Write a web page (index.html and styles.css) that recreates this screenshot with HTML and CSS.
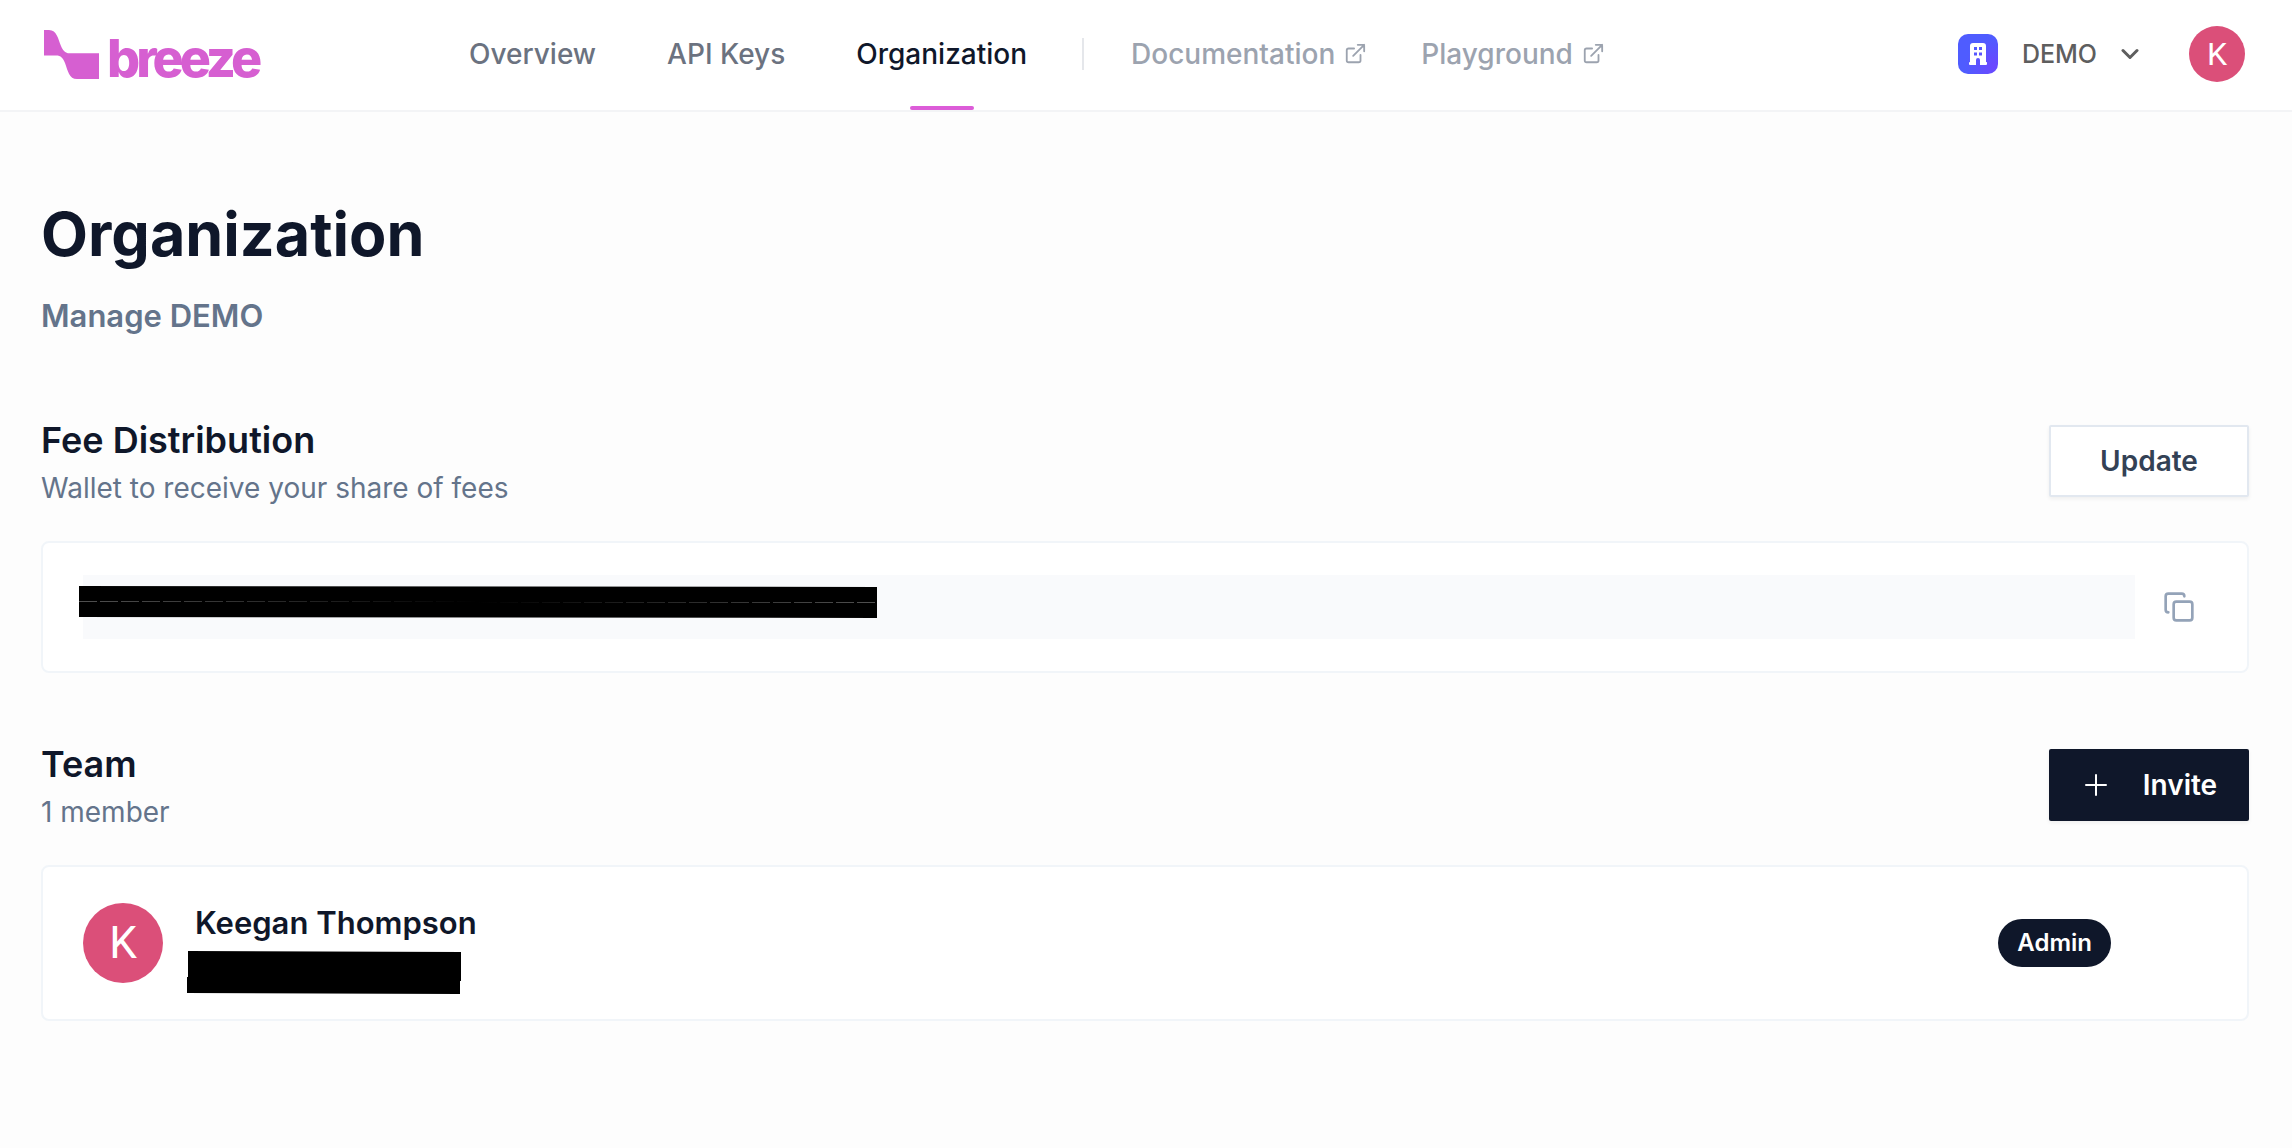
FILE: index.html
```html
<!DOCTYPE html>
<html lang="en">
<head>
<meta charset="utf-8">
<meta name="viewport" content="width=device-width, initial-scale=1">
<title>Organization</title>
<link rel="stylesheet" href="styles.css">
</head>
<body>
<header class="topbar">
  <a class="brand" href="#">
    <svg class="brand-mark" viewBox="0 0 55 49" aria-hidden="true"><path d="M0 0H5C13 0 14 9 17 16C19 21 22 23.300 25 23.300H55V49H33C25 49 24 41 21 33C19 28 17 25.500 12 25.500H0Z"/></svg>
    <span class="brand-name">breeze</span>
  </a>
  <nav class="nav">
    <a class="nav-link" href="#">Overview</a>
    <a class="nav-link" href="#">API Keys</a>
    <a class="nav-link active" href="#" aria-current="page">Organization</a>
    <span class="nav-divider"></span>
    <a class="nav-link external" href="#">Documentation
      <svg class="icon-ext" viewBox="0 0 24 24" aria-hidden="true"><path d="M18 13v6a2 2 0 0 1-2 2H5a2 2 0 0 1-2-2V8a2 2 0 0 1 2-2h6M15 2h7v7M10 14 22 2"/></svg></a>
    <a class="nav-link external" href="#">Playground
      <svg class="icon-ext" viewBox="0 0 24 24" aria-hidden="true"><path d="M18 13v6a2 2 0 0 1-2 2H5a2 2 0 0 1-2-2V8a2 2 0 0 1 2-2h6M15 2h7v7M10 14 22 2"/></svg></a>
  </nav>
  <div class="account">
    <button class="org-switch" type="button">
      <span class="org-logo"><svg viewBox="0 0 18 22" aria-hidden="true"><path fill-rule="evenodd" d="M4 0H14Q17 0 17 3V19H17.500Q18 19 18 20V21Q18 22 17 22H11V17Q11 15 9 15Q7 15 7 17V22H1Q0 22 0 21V20Q0 19 1 19V3Q1 0 4 0ZM5 4V7H8V4ZM10 4V7H13V4ZM5 9.500V12.500H8V9.500ZM10 9.500V12.500H13V9.500Z"/></svg></span>
      <span>DEMO</span>
      <svg class="chevron" viewBox="0 0 18 12" aria-hidden="true"><path d="M2 2.500 9 9.500 16 2.500"/></svg>
    </button>
    <button class="avatar" type="button" aria-label="Account">K</button>
  </div>
</header>
<main class="page">
  <h1>Organization</h1>
  <p class="lead">Manage DEMO</p>

  <section class="section">
    <div class="section-head">
      <div>
        <h2>Fee Distribution</h2>
        <p class="hint">Wallet to receive your share of fees</p>
      </div>
      <button class="btn btn-light" type="button">Update</button>
    </div>
    <div class="card wallet">
      <div class="address">
        <svg class="mask mask-address" viewBox="0 0 798 32" aria-label="Hidden wallet address">
          <defs>
            <linearGradient id="mask-fade" gradientUnits="userSpaceOnUse" x1="0" y1="0" x2="798" y2="0">
              <stop offset="0" stop-color="#505050"/>
              <stop offset="0.5" stop-color="#000"/>
              <stop offset="1" stop-color="#505050"/>
            </linearGradient>
          </defs>
          <path d="M0 0 798 1V32L0 31Z"/>
          <path class="mask-line" stroke="url(#mask-fade)" d="M0 15.500H400M400 16.500H798"/>
        </svg>
      </div>
      <button class="copy" type="button" aria-label="Copy address">
        <svg viewBox="0 0 24 24" aria-hidden="true"><rect x="8" y="8" width="14" height="14" rx="2"/><path d="M4 16a2 2 0 0 1-2-2V4a2 2 0 0 1 2-2h10a2 2 0 0 1 2 2"/></svg>
      </button>
    </div>
  </section>

  <section class="section">
    <div class="section-head">
      <div>
        <h2>Team</h2>
        <p class="hint">1 member</p>
      </div>
      <button class="btn btn-dark" type="button">
        <svg class="plus" viewBox="0 0 22 22" aria-hidden="true"><path d="M11 1V21M1 11H21"/></svg>
        Invite
      </button>
    </div>
    <div class="card member">
      <span class="avatar avatar-large">K</span>
      <div class="member-info">
        <p class="member-name">Keegan Thompson</p>
        <svg class="mask mask-email" viewBox="0 0 274 43" aria-label="Hidden email"><path d="M1 0 274 1V30H273V43L0 42V26H1Z"/></svg>
      </div>
      <span class="badge">Admin</span>
    </div>
  </section>
</main>
</body>
</html>
```
FILE: styles.css
```css
* { box-sizing: border-box; }

body {
  margin: 0;
  background: #fdfdfd;
  color: #0f172a;
  font-family: Inter, "Liberation Sans", sans-serif;
  font-weight: 500;
}

h1, h2, p { margin: 0; }

a { color: inherit; text-decoration: none; }

button {
  border: 0;
  background: none;
  padding: 0;
  color: inherit;
  font: inherit;
  cursor: pointer;
}

svg { display: block; flex: none; }

/* Header */
.topbar {
  display: flex;
  align-items: center;
  height: 112px;
  padding: 0 47px 2px 44px;
  background: #fff;
  border-bottom: 2px solid #f3f4f6;
}

.brand {
  display: flex;
  align-items: flex-end;
  gap: 8px;
  width: 425px;
  color: #d65fd1;
}

.brand-mark { width: 55px; height: 49px; fill: currentColor; }

.brand-name {
  font-size: 52px;
  line-height: 40px;
  font-weight: 800;
  letter-spacing: -4px;
}

.nav {
  display: flex;
  align-items: center;
  align-self: stretch;
  gap: 71px;
  flex: 1;
  color: #6b7280;
  font-size: 28px;
}

.nav-link {
  position: relative;
  display: flex;
  align-items: center;
  align-self: stretch;
  gap: 9px;
  white-space: nowrap;
}

.nav-link.active { color: #0f172a; }

.nav-link.active::after {
  content: "";
  position: absolute;
  bottom: -2px;
  left: 50%;
  width: 64px;
  height: 4px;
  margin-left: -32px;
  border-radius: 2px;
  background: #dc5cd8;
}

.nav-divider {
  width: 2px;
  height: 32px;
  margin: 0 -24px 0 -16px;
  background: #e5e7eb;
}

.external { color: #9ca3af; }
.external + .external { margin-left: -16px; }

.icon-ext {
  width: 22px;
  height: 22px;
  fill: none;
  stroke: currentColor;
  stroke-width: 2;
  stroke-linecap: round;
  stroke-linejoin: round;
}

.account { display: flex; align-items: center; gap: 50px; }

.org-switch {
  display: flex;
  align-items: center;
  gap: 24px;
  color: #5e5e5e;
  font-size: 25px;
}

.org-logo {
  display: grid;
  place-items: center;
  width: 40px;
  height: 40px;
  border-radius: 10px;
  background: radial-gradient(circle at 90% 80%, #6c47ff, #4f5cff 60%);
}

.org-logo svg { width: 18px; height: 22px; fill: #fff; }

.chevron {
  width: 18px;
  height: 12px;
  fill: none;
  stroke: currentColor;
  stroke-width: 3;
  stroke-linecap: round;
  stroke-linejoin: round;
}

.avatar {
  display: grid;
  place-items: center;
  flex: none;
  width: 56px;
  height: 56px;
  border-radius: 50%;
  background: #db4f79;
  color: #fff;
  font: 400 32px/56px Roboto, sans-serif;
}

.avatar-large {
  width: 80px;
  height: 80px;
  font-size: 44px;
  line-height: 80px;
}

/* Page */
.page { padding: 88px 43px 127px 41px; }

h1 { font-size: 61px; line-height: 68px; font-weight: 700; }

.lead {
  margin-top: 24px;
  color: #64748b;
  font-size: 31px;
  font-weight: 600;
  line-height: 48px;
}

.section { margin-top: 71px; }
.lead + .section { margin-top: 80px; }

.section-head {
  display: flex;
  align-items: center;
  justify-content: space-between;
  margin-bottom: 39px;
}

h2 { font-size: 36px; line-height: 40px; font-weight: 600; }

.hint {
  margin-top: 14px;
  color: #64748b;
  font-size: 28px;
  font-weight: 400;
  line-height: 28px;
}

.btn {
  display: flex;
  align-items: center;
  justify-content: center;
  width: 200px;
  height: 72px;
  border-radius: 2px;
  font-size: 28px;
  font-weight: 600;
}

.btn-light {
  border: 2px solid #e2e8f0;
  background: #fff;
  color: #334155;
  box-shadow: 0 2px 4px rgba(0, 0, 0, 0.06);
}

.btn-dark {
  gap: 36px;
  padding-left: 4px;
  background: #0f172a;
  color: #fff;
  box-shadow: 0 2px 4px rgba(0, 0, 0, 0.06);
}

.plus {
  width: 22px;
  height: 22px;
  fill: none;
  stroke: currentColor;
  stroke-width: 2;
  stroke-linecap: round;
}

.card {
  display: flex;
  align-items: center;
  border: 2px solid #f1f5f9;
  border-radius: 8px;
  background: #fff;
}

.wallet { gap: 28px; padding: 32px 52px 32px 40px; }

.address {
  position: relative;
  flex: 1;
  height: 64px;
  background: #f9fafc;
}

.mask { fill: #000; }

.mask-address {
  position: absolute;
  top: 11px;
  left: -4px;
  width: 798px;
  height: 32px;
}

.mask-line { fill: none; stroke-dasharray: 18 3; }

.copy { color: #94a3b8; }

.copy svg {
  width: 32px;
  height: 32px;
  fill: none;
  stroke: currentColor;
  stroke-width: 2;
  stroke-linecap: round;
  stroke-linejoin: round;
}

.member { padding: 36px 136px 36px 40px; }

.member-info { flex: 1; height: 80px; padding-left: 24px; }

.member-name {
  padding-left: 8px;
  font-size: 31px;
  font-weight: 600;
  line-height: 40px;
}

.mask-email { width: 274px; height: 43px; margin-top: 8px; }

.badge {
  padding: 0 19px;
  border-radius: 24px;
  background: #0f172a;
  color: #fff;
  font-size: 24px;
  font-weight: 600;
  line-height: 48px;
}
```
